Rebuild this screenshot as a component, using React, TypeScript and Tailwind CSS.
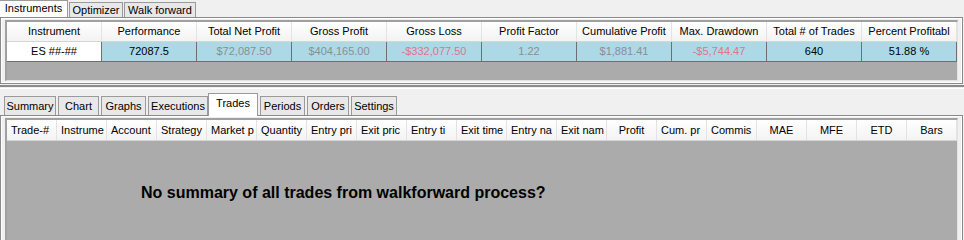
import React from "react";

const topTabs = ["Instruments", "Optimizer", "Walk forward"];
const topTabWidths = [68, 54, 72];

const summaryCols = [
  { h: "Instrument", v: "ES ##-##", c: "text-black", bg: "bg-white" },
  { h: "Performance", v: "72087.5", c: "text-black", bg: "bg-[#add8e6]" },
  { h: "Total Net Profit", v: "$72,087.50", c: "text-[#8a8f93]", bg: "bg-[#add8e6]" },
  { h: "Gross Profit", v: "$404,165.00", c: "text-[#8a8f93]", bg: "bg-[#add8e6]" },
  { h: "Gross Loss", v: "-$332,077.50", c: "text-[#e2738a]", bg: "bg-[#add8e6]" },
  { h: "Profit Factor", v: "1.22", c: "text-[#8a8f93]", bg: "bg-[#add8e6]" },
  { h: "Cumulative Profit", v: "$1,881.41", c: "text-[#8a8f93]", bg: "bg-[#add8e6]" },
  { h: "Max. Drawdown", v: "-$5,744.47", c: "text-[#e2738a]", bg: "bg-[#add8e6]" },
  { h: "Total # of Trades", v: "640", c: "text-black", bg: "bg-[#add8e6]" },
  { h: "Percent Profitabl", v: "51.88 %", c: "text-black", bg: "bg-[#add8e6]" },
];

const bottomTabs = [
  { t: "Summary", w: 52 },
  { t: "Chart", w: 41 },
  { t: "Graphs", w: 45 },
  { t: "Executions", w: 60 },
  { t: "Trades", w: 50 },
  { t: "Periods", w: 45 },
  { t: "Orders", w: 42 },
  { t: "Settings", w: 46 },
];

const tradeCols = [
  "Trade-#", "Instrume", "Account", "Strategy", "Market p", "Quantity", "Entry pri",
  "Exit pric", "Entry ti", "Exit time", "Entry na", "Exit nam", "Profit", "Cum. pr",
  "Commis", "MAE", "MFE", "ETD", "Bars",
];
const centered = new Set(["Profit", "MAE", "MFE", "ETD", "Bars"]);

function Header({ label, center = true, w }: { label: string; center?: boolean; w: string }) {
  return (
    <div
      className={`${w} h-full shrink-0 overflow-hidden whitespace-nowrap border-r border-[#e3e3e3] bg-gradient-to-b from-white to-[#f3f3f3] flex items-center ${
        center ? "justify-center" : "justify-start pl-[4px]"
      }`}
    >
      {label}
    </div>
  );
}

export default function App() {
  return (
    <div
      className="w-[964px] h-[240px] overflow-hidden bg-[#f0f0f0] text-[11px] leading-none text-black"
      style={{ fontFamily: '"Liberation Sans", Arial, sans-serif' }}
    >
      {/* top tab strip */}
      <div className="h-[17px] flex items-end">
        {topTabs.map((t, i) =>
          i === 0 ? (
            <div
              key={t}
              className="h-[17px] w-[68px] bg-white border-r border-t border-[#9a9a9a] flex items-center justify-center pb-[1px] relative z-10"
            >
              {t}
            </div>
          ) : (
            <div
              key={t}
              style={{ width: topTabWidths[i] }}
              className="h-[15px] ml-[1px] bg-[#e8e8e8] border border-b-0 border-[#9a9a9a] flex items-center justify-center"
            >
              {t}
            </div>
          )
        )}
      </div>

      {/* top panel */}
      <div className="h-[67px] mr-[1px] border border-[#8a8a8a] bg-white p-[1px]">
        <div className="h-full bg-[#f0f0f0] p-[1px]">
          <div className="h-full border-t-2 border-l-2 border-[#a0a0a0] mx-[2px] border-r border-b border-r-[#e3e3e3] border-b-[#e3e3e3] bg-[#ababab] flex flex-col">
            <div className="h-[20px] flex border-b border-[#d5d5d5]">
              {summaryCols.map((c) => (
                <Header key={c.h} label={c.h} w="w-[95px]" />
              ))}
            </div>
            <div className="h-[20px] flex border-b border-[#6f6f6f]">
              {summaryCols.map((c) => (
                <div
                  key={c.h}
                  className={`w-[95px] h-full shrink-0 border-r border-[#6f6f6f] flex items-center justify-center ${c.bg} ${c.c}`}
                >
                  {c.v}
                </div>
              ))}
            </div>
            <div className="flex-1" />
          </div>
        </div>
      </div>

      {/* splitter */}
      <div className="h-[4px] mt-[1px] border-t-2 border-[#8a8a8a] border-b border-b-white" />

      {/* bottom tab strip */}
      <div className="h-[26px] flex items-end pl-[2px]">
        {bottomTabs.map((t) =>
          t.t === "Trades" ? (
            <div
              key={t.t}
              style={{ width: t.w }}
              className="h-[23px] bg-white border border-b-0 border-[#9a9a9a] flex items-center justify-center pb-[3px] relative z-10 -mb-[1px]"
            >
              {t.t}
            </div>
          ) : (
            <div
              key={t.t}
              style={{ width: t.w }}
              className="h-[19px] ml-[2px] bg-[#e8e8e8] border border-b-0 border-[#9a9a9a] flex items-center justify-center"
            >
              {t.t}
            </div>
          )
        )}
      </div>

      {/* bottom panel */}
      <div className="h-[140px] mr-[1px] border-t border-l border-r border-[#8a8a8a] bg-white p-[1px]">
        <div className="h-full bg-[#f0f0f0] px-[1px] pt-[1px]">
          <div className="h-full border-t-2 border-l-2 border-[#a0a0a0] mx-[2px] border-r border-r-[#e3e3e3] bg-[#ababab] flex flex-col">
            <div className="h-[21px] flex border-b border-[#d5d5d5] shrink-0">
              {tradeCols.map((c) => (
                <Header key={c} label={c} center={centered.has(c)} w="w-[50px]" />
              ))}
            </div>
            <div className="flex-1 pl-[134px] pt-[43px]">
              <p className="text-[16px] font-bold leading-[18px]">
                No summary of all trades from walkforward process?
              </p>
            </div>
          </div>
        </div>
      </div>
    </div>
  );
}
